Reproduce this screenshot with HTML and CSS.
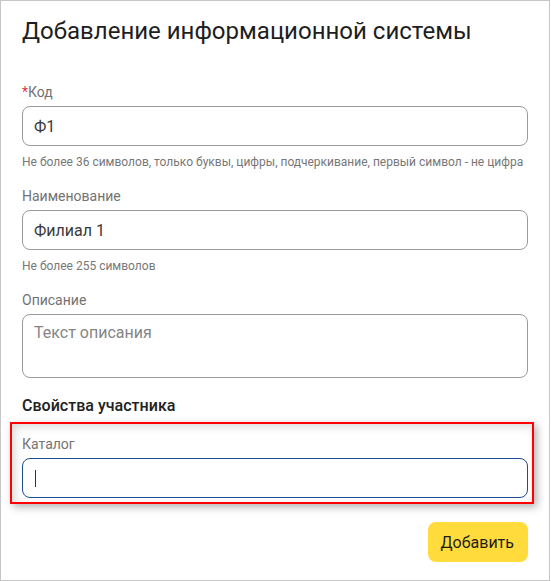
FILE: index.html
```html
<!DOCTYPE html>
<html lang="ru">
<head>
<meta charset="utf-8">
<title>Добавление информационной системы</title>
<link rel="stylesheet" href="styles.css">
</head>
<body>
<div class="panel">
  <h1 class="title">Добавление информационной системы</h1>

  <div class="field">
    <label class="label"><span class="req">*</span>Код</label>
    <input class="input" type="text" value="Ф1">
    <div class="hint">Не более 36 символов, только буквы, цифры, подчеркивание, первый символ - не цифра</div>
  </div>

  <div class="field">
    <label class="label">Наименование</label>
    <input class="input" type="text" value="Филиал 1">
    <div class="hint">Не более 255 символов</div>
  </div>

  <div class="field">
    <label class="label">Описание</label>
    <textarea class="textarea" placeholder="Текст описания"></textarea>
  </div>

  <div class="section">Свойства участника</div>

  <div class="field field-last">
    <label class="label">Каталог</label>
    <div class="input focused"><span class="caret"></span></div>
    <div class="annotation"></div>
  </div>

  <div class="actions">
    <button class="btn" type="button">Добавить</button>
  </div>
</div>
</body>
</html>
```

FILE: styles.css
```css
* { box-sizing: border-box; }

html, body {
  margin: 0;
  padding: 0;
  background: #ffffff;
}

body {
  font-family: Roboto, "Liberation Sans", Arial, sans-serif;
  color: #222222;
}

.panel {
  width: 550px;
  height: 581px;
  border: 1px solid #c6c6c6;
  padding: 16px 21px 18px 21px;
  background: #ffffff;
}

.title {
  margin: 0 0 37px 0;
  font-size: 24px;
  line-height: 28px;
  font-weight: 400;
  color: #1e1e1e;
}

.field {
  position: relative;
  display: flex;
  flex-direction: column;
  margin-bottom: 16px;
}

.field-last {
  margin-bottom: 24px;
}

.label {
  display: block;
  font-size: 14px;
  line-height: 20px;
  color: #737373;
  margin-bottom: 4px;
}

.req {
  color: #e5334b;
}

.input {
  display: flex;
  align-items: center;
  width: 100%;
  height: 40px;
  margin: 0;
  padding: 0 11px;
  border: 1px solid #9a9a9a;
  border-radius: 8px;
  font-family: inherit;
  font-size: 16px;
  color: #3a3a3a;
  background: #ffffff;
  outline: none;
}

.input.focused {
  border-color: #1d4f94;
}

.caret {
  display: block;
  width: 1px;
  height: 17px;
  margin-left: 1px;
  background: #333333;
}

.textarea {
  display: block;
  width: 100%;
  height: 64px;
  margin: 0;
  padding: 8px 11px;
  border: 1px solid #9a9a9a;
  border-radius: 8px;
  font-family: inherit;
  font-size: 16px;
  line-height: 20px;
  color: #333333;
  resize: none;
  outline: none;
}

.textarea::placeholder {
  color: #858585;
  opacity: 1;
}

.hint {
  margin-top: 8px;
  font-size: 12px;
  line-height: 16px;
  color: #777777;
  white-space: nowrap;
}

.section {
  font-family: "Roboto Medium", Roboto, "Liberation Sans", Arial, sans-serif;
  font-size: 16px;
  line-height: 24px;
  font-weight: 500;
  color: #222222;
  margin-bottom: 16px;
}

.annotation {
  position: absolute;
  top: -12px;
  left: -12px;
  right: -6px;
  bottom: -6px;
  border: 2px solid #ff0000;
  box-shadow: 3px 3px 8px rgba(0, 0, 0, 0.3), inset 3px 3px 8px rgba(0, 0, 0, 0.15);
  pointer-events: none;
}

.actions {
  display: flex;
  justify-content: flex-end;
}

.btn {
  height: 40px;
  padding: 0 14px 0 13px;
  border: none;
  border-radius: 8px;
  background: #ffdc3c;
  font-family: inherit;
  font-size: 16px;
  color: #1e1e1e;
  cursor: pointer;
}
```
